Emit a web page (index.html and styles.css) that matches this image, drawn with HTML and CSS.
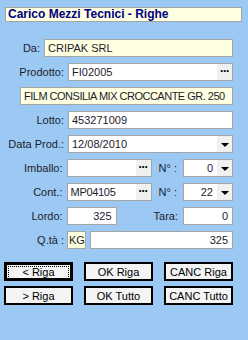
FILE: index.html
```html
<!doctype html>
<html lang="it">
<head>
	<meta charset="utf-8">
	<meta name="viewport" content="width=device-width, initial-scale=1">
	<title>Carico Mezzi Tecnici - Righe</title>
	<link rel="stylesheet" href="styles.css">
</head>
<body>

	<header class="title">Carico Mezzi Tecnici - Righe</header>

	<main class="form">

		<div class="row row-da">
			<span class="lbl">Da:</span>
			<div class="field cream"><span class="val">CRIPAK SRL</span></div>
		</div>

		<div class="row">
			<span class="lbl">Prodotto:</span>
			<div class="field"><span class="val">FI02005</span><span class="dots">&middot;&middot;&middot;</span></div>
		</div>

		<div class="row row-desc">
			<div class="field cream"><span class="val">FILM CONSILIA MIX CROCCANTE GR. 250</span></div>
		</div>

		<div class="row">
			<span class="lbl">Lotto:</span>
			<div class="field"><span class="val">453271009</span></div>
		</div>

		<div class="row">
			<span class="lbl">Data Prod.:</span>
			<div class="field"><span class="val">12/08/2010</span><span class="arrow"></span></div>
		</div>

		<div class="row">
			<span class="lbl">Imballo:</span>
			<div class="field w-code"><span class="val"></span><span class="dots">&middot;&middot;&middot;</span></div>
			<span class="lbl-sm">N° :</span>
			<div class="field w-num"><span class="val num">0</span><span class="arrow"></span></div>
		</div>

		<div class="row">
			<span class="lbl">Cont.:</span>
			<div class="field w-code"><span class="val">MP04105</span><span class="dots">&middot;&middot;&middot;</span></div>
			<span class="lbl-sm">N° :</span>
			<div class="field w-num"><span class="val num">22</span><span class="arrow"></span></div>
		</div>

		<div class="row">
			<span class="lbl">Lordo:</span>
			<div class="field w-short"><span class="val num">325</span></div>
			<span class="lbl-sm lbl-tara">Tara:</span>
			<div class="field w-num"><span class="val num">0</span></div>
		</div>

		<div class="row">
			<span class="lbl lbl-qta">Q.tà :</span>
			<div class="field cream w-unit"><span class="val">KG</span></div>
			<div class="field w-qta"><span class="val num">325</span></div>
		</div>

	</main>

	<section class="buttons">
		<button class="focus"><span>&lt; Riga</span></button>
		<button>OK Riga</button>
		<button>CANC Riga</button>
		<button>&gt; Riga</button>
		<button>OK Tutto</button>
		<button>CANC Tutto</button>
	</section>

</body>
</html>
```

FILE: styles.css
```css
:root {
	--bg: #9cc9f3;
	--cream: #ffffe1;
	--border: 1px solid #a5a5a5;
	--text: #1c1c2c;
}

html {
	background-color: var(--bg);
}
body {
	margin: 0;
	width: 248px;
	height: 340px;
	font-family: "Liberation Sans", Arial, sans-serif;
	font-size: 11px;
	color: var(--text);
}

/* title bar */
.title {
	margin: 7px 6px 0 5px;
	height: 13px;
	line-height: 13px;
	padding: 0 2px;
	background-color: var(--cream);
	border: var(--border);
	color: #000080;
	font-weight: bold;
	font-size: 12px;
}

/* form rows */
.form {
	display: flex;
	flex-direction: column;
	gap: 6px;
	margin: 17px 15px 0 0;
}
.row {
	display: flex;
	align-items: center;
	height: 18px;
}
.lbl {
	width: 64px;
	margin-right: 4px;
	text-align: right;
	white-space: nowrap;
}
.row-da .lbl {
	width: 40px;
}
.row-desc {
	padding-left: 20px;
}
.row-desc .val {
	letter-spacing: -0.5px;
}
.lbl-sm {
	width: 22px;
	margin: 0 3px 0 7px;
	white-space: nowrap;
}
.lbl-tara {
	width: 27px;
	margin-left: 37px;
}

.field {
	flex: 1;
	min-width: 0;
	height: 16px;
	display: flex;
	align-items: center;
	background-color: #fff;
	border: var(--border);
}
.field.cream {
	background-color: var(--cream);
}
.val {
	flex: 1;
	min-width: 0;
	padding: 0 3px;
	white-space: nowrap;
	overflow: hidden;
}
.val.num {
	text-align: right;
	padding-right: 4px;
}
.w-code {
	flex: none;
	width: 83px;
}
.w-code .val {
	letter-spacing: -0.3px;
}
.w-num {
	flex: none;
	width: 48px;
}
.w-short {
	flex: none;
	width: 48px;
}
.w-unit {
	flex: none;
	width: 17px;
	margin-left: -1px;
}
.w-unit .val {
	padding: 0 1px;
}
.w-qta {
	margin-left: 4px;
}

/* ... and dropdown parts */
.dots {
	width: 15px;
	height: 16px;
	line-height: 15px;
	background-color: #f0f0f0;
	text-align: center;
	font-weight: bold;
	font-size: 12px;
	letter-spacing: -1px;
	color: #000;
}
.arrow {
	width: 15px;
	height: 16px;
	background-color: #f0f0f0;
	position: relative;
}
.arrow::after {
	content: "";
	position: absolute;
	left: 4px;
	top: 7px;
	border-left: 4px solid transparent;
	border-right: 4px solid transparent;
	border-top: 4px solid #000;
}

/* bottom buttons */
.buttons {
	display: grid;
	grid-template-columns: 69px 69px 69px;
	column-gap: 11px;
	row-gap: 5px;
	margin: 13px 0 0 4px;
}
button {
	height: 19px;
	padding: 0;
	background-color: #f4f4f4;
	border: 2px solid #000;
	font-family: "Liberation Sans", Arial, sans-serif;
	font-size: 11px;
	color: #000;
}
button.focus {
	border-width: 3px;
	padding: 1px;
}
button.focus span {
	display: block;
	height: 11px;
	line-height: 11px;
	border: 1px dotted #000;
}
```
